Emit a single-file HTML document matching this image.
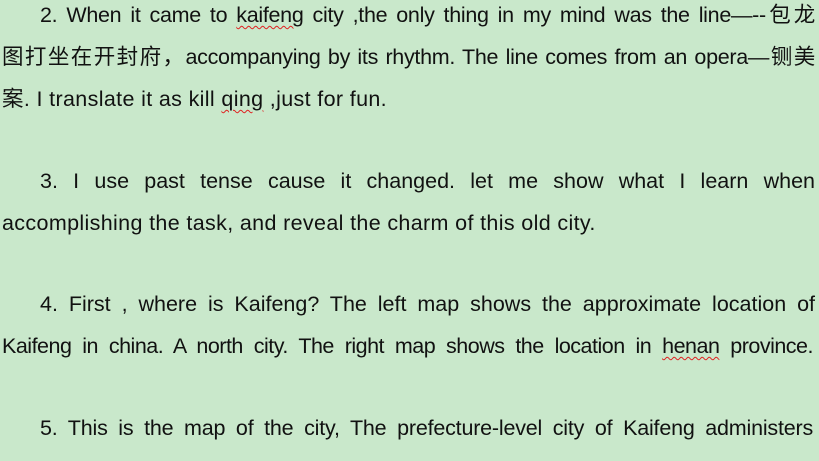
<!DOCTYPE html>
<html><head><meta charset="utf-8"><style>
html,body{margin:0;padding:0}
body{width:819px;height:461px;background:#c9e8cb;position:relative;overflow:hidden;font-family:"Liberation Sans","Noto Sans CJK SC",sans-serif;font-size:21.5px;color:#111;}
.l{position:absolute;white-space:nowrap;line-height:24px;letter-spacing:0.35px}
.j{text-align:justify;text-align-last:justify;white-space:normal;height:24px;overflow:visible;letter-spacing:0}
.s{text-decoration:underline wavy #e02020;text-decoration-thickness:1px;text-underline-offset:3px}
</style></head><body>
<div class="l j" style="left:40px;width:775px;top:3px;letter-spacing:-0.3px">2. When it came to <span class="s">kaifeng</span> city ,the only thing in my mind was the line—--包龙</div>
<div class="l j" style="left:2px;width:813px;top:45px;letter-spacing:-0.3px">图打坐在开封府，accompanying by its rhythm. The line comes from an opera—铡美</div>
<div class="l" style="left:2px;top:87px">案. I translate it as kill <span class="s">qing</span> ,just for fun.</div>
<div class="l j" style="left:40px;width:775px;top:169px">3. I use past tense cause it changed. let me show what I learn when</div>
<div class="l" style="left:2px;top:211px">accomplishing the task, and reveal the charm of this old city.</div>
<div class="l j" style="left:40px;width:775px;top:292px">4. First , where is Kaifeng? The left map shows the approximate location of</div>
<div class="l j" style="left:2px;width:811px;top:334px;letter-spacing:-0.5px">Kaifeng in china. A north city. The right map shows the location in <span class="s">henan</span> province.</div>
<div class="l j" style="left:40px;width:773px;top:416px;letter-spacing:-0.2px">5. This is the map of the city, The prefecture-level city of Kaifeng administers</div>
</body></html>
